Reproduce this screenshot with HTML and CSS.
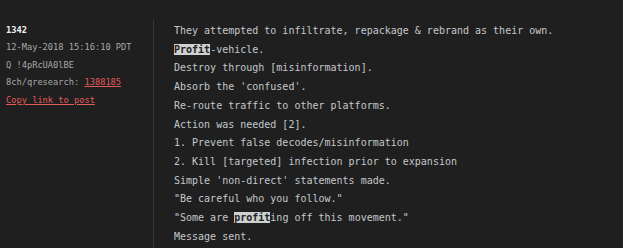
FILE: index.html
```html
<!DOCTYPE html>
<html>
<head>
<meta charset="utf-8">
<link rel="stylesheet" href="styles.css">
</head>
<body>
<div class="post">
  <div class="meta">
    <div class="num">1342</div>
    <div class="date">12-May-2018 15:16:10 PDT</div>
    <div class="trip">Q !4pRcUA0lBE</div>
    <div class="board">8ch/qresearch: <a class="link">1388185</a></div>
    <div><a class="link">Copy link to post</a></div>
  </div>
  <div class="body">
    <div>They attempted to infiltrate, repackage &amp; rebrand as their own.</div>
    <div><span class="hl">Profit</span>-vehicle.</div>
    <div>Destroy through [misinformation].</div>
    <div>Absorb the 'confused'.</div>
    <div>Re-route traffic to other platforms.</div>
    <div>Action was needed [2].</div>
    <div>1. Prevent false decodes/misinformation</div>
    <div>2. Kill [targeted] infection prior to expansion</div>
    <div>Simple 'non-direct' statements made.</div>
    <div>"Be careful who you follow."</div>
    <div>"Some are <span class="hl">profit</span>ing off this movement."</div>
    <div>Message sent.</div>
  </div>
</div>
</body>
</html>
```
FILE: styles.css
```css
html, body {
  margin: 0;
  padding: 0;
  background: #1f1f1f;
  height: 100%;
  overflow: hidden;
}
.post {
  display: flex;
  height: 228px;
  margin-top: 20px;
  font-family: "DejaVu Sans Mono", "Liberation Mono", monospace;
}
.meta {
  width: 147px;
  padding-left: 6px;
  padding-top: 2px;
  font-size: 8.7px;
  line-height: 17.4px;
  color: #a8a8a8;
}
.num {
  color: #f0f0f0;
  font-weight: bold;
}
.link {
  color: #e05a5a;
  text-decoration: underline;
}
.body {
  border-left: 1px solid #383838;
  padding-left: 20px;
  padding-top: 2px;
  font-size: 10px;
  line-height: 18.7px;
  color: #c4c8cc;
}
.hl {
  background: #d0d0d0;
  color: #222;
  font-weight: bold;
}
```
